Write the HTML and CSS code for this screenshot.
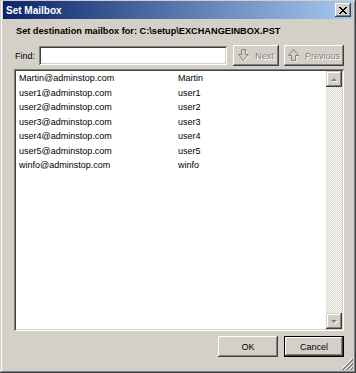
FILE: index.html
```html
<!DOCTYPE html>
<html lang="en">
<head>
  <meta charset="UTF-8" />
  <title>Set Mailbox</title>
  <link rel="stylesheet" href="styles.css">
</head>
<body>
  <div class="window">
    <div class="titlebar">
      <span class="title">Set Mailbox</span>
      <button class="close-btn" title="Close">
        <svg width="8" height="7" viewBox="0 0 8 7">
          <path d="M0 0 L7 7 M1 0 L8 7 M7 0 L0 7 M8 0 L1 7" stroke="#000" stroke-width="1" />
        </svg>
      </button>
    </div>

    <div class="content">
      <div class="heading">Set destination mailbox for: C:\setup\EXCHANGEINBOX.PST</div>

      <div class="find-row">
        <label class="find-label" for="find">Find:</label>
        <input id="find" class="field" type="text" />
        <button class="btn nav-btn next" disabled>
          <svg class="nav-icon" width="12" height="13" viewBox="0 0 12 13">
            <polygon points="4.5,1.5 8.5,1.5 8.5,6.5 11.5,6.5 6.5,12.5 1.5,6.5 4.5,6.5" fill="#fff" />
            <polygon points="3.5,0.5 7.5,0.5 7.5,5.5 10.5,5.5 5.5,11.5 0.5,5.5 3.5,5.5" fill="#d4d0c8" stroke="#808080" />
          </svg>
          Next
        </button>
        <button class="btn nav-btn prev" disabled>
          <svg class="nav-icon" width="12" height="13" viewBox="0 0 12 13">
            <polygon points="6.5,1.5 11.5,7.5 8.5,7.5 8.5,12.5 4.5,12.5 4.5,7.5 1.5,7.5" fill="#fff" />
            <polygon points="5.5,0.5 10.5,6.5 7.5,6.5 7.5,11.5 3.5,11.5 3.5,6.5 0.5,6.5" fill="#d4d0c8" stroke="#808080" />
          </svg>
          Previous
        </button>
      </div>

      <div class="list">
        <div class="rows">
          <div class="row"><span class="col-mail">Martin@adminstop.com</span><span>Martin</span></div>
          <div class="row"><span class="col-mail">user1@adminstop.com</span><span>user1</span></div>
          <div class="row"><span class="col-mail">user2@adminstop.com</span><span>user2</span></div>
          <div class="row"><span class="col-mail">user3@adminstop.com</span><span>user3</span></div>
          <div class="row"><span class="col-mail">user4@adminstop.com</span><span>user4</span></div>
          <div class="row"><span class="col-mail">user5@adminstop.com</span><span>user5</span></div>
          <div class="row"><span class="col-mail">winfo@adminstop.com</span><span>winfo</span></div>
        </div>
        <div class="scrollbar">
          <div class="sb-btn"><span class="arrow up"></span></div>
          <div class="sb-track"></div>
          <div class="sb-btn"><span class="arrow down"></span></div>
        </div>
      </div>

      <div class="buttons">
        <button class="btn dlg-btn">OK</button>
        <button class="btn dlg-btn default">Cancel</button>
      </div>
    </div>

    <svg class="grip" width="12" height="12" viewBox="0 0 12 12">
      <path d="M11 1 L1 11 M11 5 L5 11 M11 9 L9 11" stroke="#fff" />
      <path d="M12 1 L1 12 M12 2 L2 12 M12 5 L5 12 M12 6 L6 12 M12 9 L9 12 M12 10 L10 12" stroke="#808080" />
    </svg>
  </div>
</body>
</html>
```

FILE: styles.css
```css
* {
  box-sizing: border-box;
}

body {
  margin: 0;
  padding: 0;
  font-family: 'Liberation Sans', Arial, sans-serif;
  font-size: 9px;
  color: #000;
  background: #d4d0c8;
}

.window {
  position: relative;
  width: 356px;
  height: 373px;
  padding: 1px 3px 3px 3px;
  display: flex;
  flex-direction: column;
  background: #d4d0c8;
  box-shadow: inset -1px -1px #404040, inset 1px 1px #d4d0c8,
              inset -2px -2px #808080, inset 2px 2px #fff;
}

.titlebar {
  height: 18px;
  display: flex;
  align-items: center;
  justify-content: space-between;
  padding: 0 2px 0 3px;
  background: linear-gradient(to right, #0a246a, #a6caf0);
}

.title {
  color: #fff;
  font-weight: 700;
  font-size: 10px;
}

.close-btn {
  width: 16px;
  height: 14px;
  padding: 0;
  border: none;
  background: #d4d0c8;
  display: flex;
  align-items: center;
  justify-content: center;
  box-shadow: inset -1px -1px #404040, inset 1px 1px #fff,
              inset -2px -2px #808080, inset 2px 2px #d4d0c8;
}

.content {
  flex: 1;
  display: flex;
  flex-direction: column;
  padding: 0 9px 13px 11px;
}

.heading {
  margin-top: 5px;
  padding-left: 2px;
  height: 14px;
  line-height: 14px;
  font-weight: 700;
  font-size: 9.2px;
}

.find-row {
  margin-top: 7px;
  height: 21px;
  display: flex;
  align-items: center;
  gap: 5px;
}

.find-label {
  width: 20px;
  padding-left: 1px;
}

.field {
  flex: 1;
  height: 19px;
  margin-right: 1px;
  border: none;
  background: #fff;
  box-shadow: inset 1px 1px #808080, inset -1px -1px #fff,
              inset 2px 2px #404040, inset -2px -2px #d4d0c8;
}

.btn {
  height: 21px;
  padding: 0;
  border: none;
  background: #d4d0c8;
  font-family: inherit;
  font-size: 9px;
  color: #000;
  box-shadow: inset -1px -1px #404040, inset 1px 1px #fff,
              inset -2px -2px #808080, inset 2px 2px #d4d0c8;
}

.nav-btn {
  display: flex;
  align-items: center;
  justify-content: center;
  gap: 5px;
  color: #808080;
  text-shadow: 1px 1px #fff;
}

.next {
  width: 46px;
}

.prev {
  width: 60px;
}

.list {
  margin-top: 3px;
  flex: 1;
  display: flex;
  background: #fff;
  padding: 2px;
  box-shadow: inset 1px 1px #808080, inset -1px -1px #fff,
              inset 2px 2px #404040, inset -2px -2px #d4d0c8;
}

.rows {
  flex: 1;
  padding: 0 0 0 3px;
}

.row {
  display: flex;
  height: 14.5px;
  line-height: 14.5px;
}

.col-mail {
  width: 159px;
}

.scrollbar {
  width: 16px;
  display: flex;
  flex-direction: column;
}

.sb-btn {
  height: 16px;
  display: flex;
  align-items: center;
  justify-content: center;
  background: #d4d0c8;
  box-shadow: inset -1px -1px #404040, inset 1px 1px #d4d0c8,
              inset -2px -2px #808080, inset 2px 2px #fff;
}

.sb-track {
  flex: 1;
  background: repeating-conic-gradient(#fff 0 25%, #d4d0c8 0 50%) 0 0 / 2px 2px;
}

.arrow {
  width: 0;
  height: 0;
  border-left: 3px solid transparent;
  border-right: 3px solid transparent;
  filter: drop-shadow(1px 1px 0 #fff);
}

.arrow.up {
  border-bottom: 3px solid #808080;
}

.arrow.down {
  border-top: 3px solid #808080;
}

.buttons {
  margin-top: 5px;
  display: flex;
  justify-content: flex-end;
  gap: 6px;
}

.dlg-btn {
  width: 60px;
}

.dlg-btn.default {
  box-shadow: inset 0 0 0 1px #000, inset -2px -2px #404040, inset 2px 2px #fff,
              inset -3px -3px #808080;
}

.grip {
  position: absolute;
  right: 3px;
  bottom: 3px;
}
```
